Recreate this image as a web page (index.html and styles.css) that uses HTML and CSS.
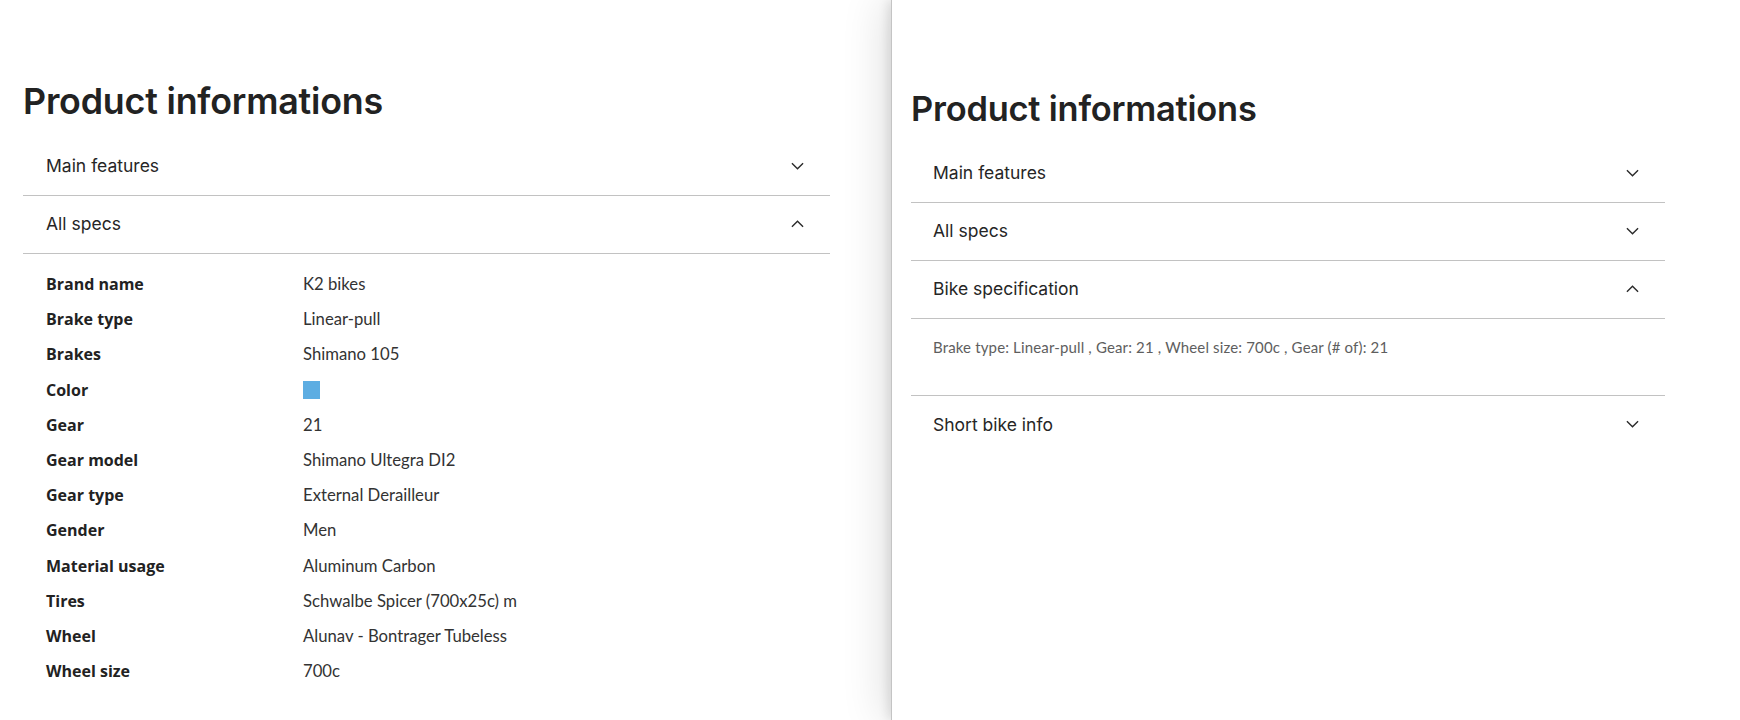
FILE: index.html
```html
<!DOCTYPE html>
<html lang="en">
<head>
<meta charset="utf-8">
<title>Product informations</title>
<link rel="stylesheet" href="styles.css">
</head>
<body>
<div class="screen">
  <section class="page">
    <h2 class="title">Product informations</h2>
    <div class="accordion">
      <div class="acc-head">
        <span>Main features</span>
        <svg class="chev" viewBox="0 0 14 8" width="14" height="8"><polyline points="1,1 7,7 13,1"/></svg>
      </div>
      <div class="acc-head">
        <span>All specs</span>
        <svg class="chev" viewBox="0 0 14 8" width="14" height="8"><polyline points="1,7 7,1 13,7"/></svg>
      </div>
      <div class="specs">
        <div class="spec-label">Brand name</div><div class="spec-value">K2 bikes</div>
        <div class="spec-label">Brake type</div><div class="spec-value">Linear-pull</div>
        <div class="spec-label">Brakes</div><div class="spec-value">Shimano 105</div>
        <div class="spec-label">Color</div><div class="spec-value"><span class="swatch"></span></div>
        <div class="spec-label">Gear</div><div class="spec-value">21</div>
        <div class="spec-label">Gear model</div><div class="spec-value">Shimano Ultegra DI2</div>
        <div class="spec-label">Gear type</div><div class="spec-value">External Derailleur</div>
        <div class="spec-label">Gender</div><div class="spec-value">Men</div>
        <div class="spec-label">Material usage</div><div class="spec-value">Aluminum Carbon</div>
        <div class="spec-label">Tires</div><div class="spec-value">Schwalbe Spicer (700x25c) m</div>
        <div class="spec-label">Wheel</div><div class="spec-value">Alunav - Bontrager Tubeless</div>
        <div class="spec-label">Wheel size</div><div class="spec-value">700c</div>
      </div>
    </div>
  </section>
  <section class="drawer">
    <h2 class="title title-sm">Product informations</h2>
    <div class="accordion">
      <div class="acc-head">
        <span>Main features</span>
        <svg class="chev" viewBox="0 0 14 8" width="14" height="8"><polyline points="1,1 7,7 13,1"/></svg>
      </div>
      <div class="acc-head">
        <span>All specs</span>
        <svg class="chev" viewBox="0 0 14 8" width="14" height="8"><polyline points="1,1 7,7 13,1"/></svg>
      </div>
      <div class="acc-head">
        <span>Bike specification</span>
        <svg class="chev" viewBox="0 0 14 8" width="14" height="8"><polyline points="1,7 7,1 13,7"/></svg>
      </div>
      <div class="acc-body">Brake type: Linear-pull , Gear: 21 , Wheel size: 700c , Gear (# of): 21</div>
      <div class="acc-head no-line">
        <span>Short bike info</span>
        <svg class="chev" viewBox="0 0 14 8" width="14" height="8"><polyline points="1,1 7,7 13,1"/></svg>
      </div>
    </div>
  </section>
</div>
</body>
</html>
```
FILE: styles.css
```css
* { box-sizing: border-box; }
html, body { margin: 0; padding: 0; background: #fff; }
body { overflow: hidden; }

.screen {
  display: flex;
  width: 1740px;
  height: 720px;
}

.page {
  width: 891px;
  flex: none;
  padding: 80px 61px 0 23px;
}

.drawer {
  flex: 1;
  height: 720px;
  padding: 87px 75px 0 19px;
  border-left: 1px solid #c4c4c4;
  box-shadow: -3px 0 10px rgba(0, 0, 0, 0.1), -8px 0 40px rgba(0, 0, 0, 0.12);
  background: #fff;
  position: relative;
  z-index: 1;
}

.title {
  margin: 0 0 15px;
  font-family: Inter, "Noto Sans", sans-serif;
  font-weight: 600;
  font-size: 35.8px;
  line-height: 43px;
  color: #222;
  letter-spacing: -0.2px;
}
.title-sm { font-size: 34.4px; margin-bottom: 15px; }

.acc-head {
  display: flex;
  align-items: center;
  justify-content: space-between;
  height: 58px;
  padding: 0 26px 2px 23px;
  border-bottom: 1px solid #c2c2c2;
  font-family: Inter, "Noto Sans", sans-serif;
  font-size: 17.5px;
  color: #262626;
}
.drawer .acc-head { padding-left: 22px; }
.acc-head.no-line { border-bottom: none; }

.chev {
  width: 13px;
  height: 8px;
  fill: none;
  stroke: #2a2a2a;
  stroke-width: 1.5;
}

.specs {
  display: grid;
  grid-template-columns: 257px 1fr;
  padding: 13px 0 0 23px;
  font-size: 16px;
  line-height: 35.2px;
}
.spec-label {
  font-family: "Open Sans", Lato, sans-serif;
  font-weight: 700;
  color: #222;
}
.spec-value {
  font-family: Lato, "Noto Sans", sans-serif;
  font-size: 16.7px;
  color: #333;
  display: flex;
  align-items: center;
}
.swatch {
  display: block;
  width: 17px;
  height: 18px;
  background: #5dade2;
}

.acc-body {
  padding: 17px 22px 37px;
  border-bottom: 1px solid #c2c2c2;
  font-family: Lato, "Noto Sans", sans-serif;
  font-size: 15px;
  letter-spacing: 0.15px;
  line-height: 22px;
  color: #5e5e5e;
}
```
